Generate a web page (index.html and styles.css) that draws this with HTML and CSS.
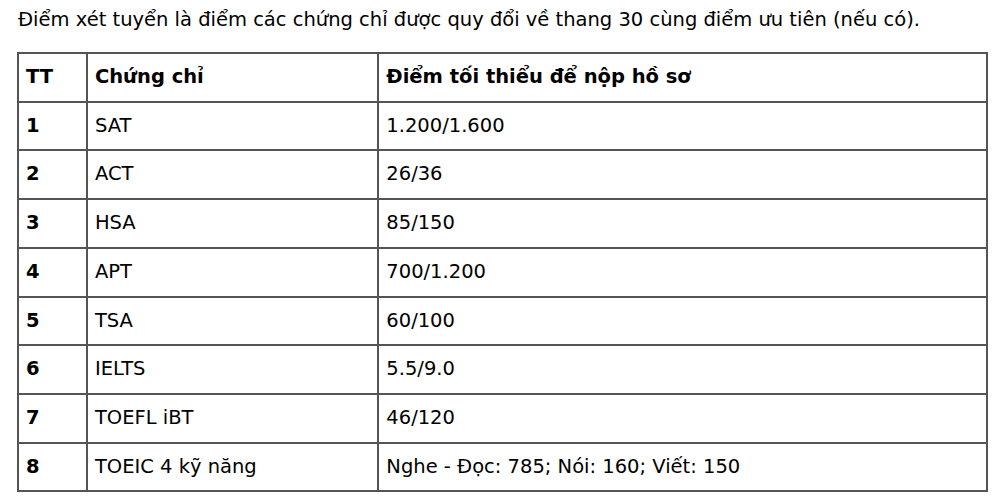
FILE: index.html
```html
<!DOCTYPE html>
<html lang="vi">
<head>
<meta charset="utf-8">
<link rel="stylesheet" href="styles.css">
</head>
<body>
<div class="page">
  <p class="intro">Điểm xét tuyển là điểm các chứng chỉ được quy đổi về thang 30 cùng điểm ưu tiên (nếu có).</p>
  <table class="scores">
    <colgroup>
      <col class="c1"><col class="c2"><col class="c3">
    </colgroup>
    <thead>
      <tr><th>TT</th><th>Chứng chỉ</th><th>Điểm tối thiểu để nộp hồ sơ</th></tr>
    </thead>
    <tbody>
      <tr><td class="num">1</td><td>SAT</td><td>1.200/1.600</td></tr>
      <tr><td class="num">2</td><td>ACT</td><td>26/36</td></tr>
      <tr><td class="num">3</td><td>HSA</td><td>85/150</td></tr>
      <tr><td class="num">4</td><td>APT</td><td>700/1.200</td></tr>
      <tr><td class="num">5</td><td>TSA</td><td>60/100</td></tr>
      <tr><td class="num">6</td><td>IELTS</td><td>5.5/9.0</td></tr>
      <tr><td class="num">7</td><td>TOEFL iBT</td><td>46/120</td></tr>
      <tr><td class="num">8</td><td>TOEIC 4 kỹ năng</td><td>Nghe - Đọc: 785; Nói: 160; Viết: 150</td></tr>
    </tbody>
  </table>
</div>
</body>
</html>
```
FILE: styles.css
```css
html, body {
  margin: 0;
  padding: 0;
  background: #fff;
}
body {
  font-family: "DejaVu Sans", sans-serif;
  font-size: 19.5px;
  color: #000;
}
.page {
  padding: 8px 0 0 17px;
}
.intro {
  margin: 0 0 20px 1px;
  line-height: 24px;
}
.scores {
  border-collapse: collapse;
  width: 971px;
}
.c1 { width: 69px; }
.c2 { width: 292px; }
.c3 { width: 610px; }
.scores th, .scores td {
  border: 2px solid #555;
  padding: 12px 7px 12px 7px;
  line-height: 22.7px;
  text-align: left;
  vertical-align: middle;
}
.scores th, .scores td.num {
  font-weight: bold;
}
```
